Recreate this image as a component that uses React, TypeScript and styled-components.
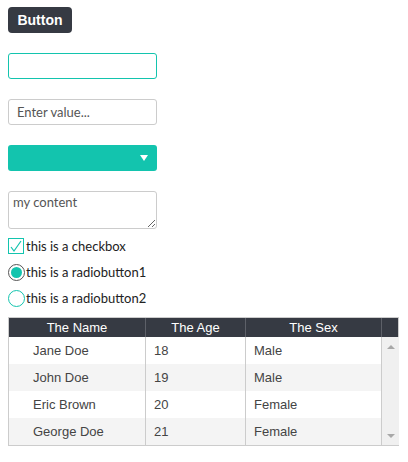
import React from "react";
import styled, { createGlobalStyle } from "styled-components";

const teal = "#13c4ae";
const dark = "#363a43";

const Global = createGlobalStyle`
  html, body { margin: 0; padding: 0; background: #fff; }
  body { font-family: "Lato", "Noto Sans", sans-serif; }
`;

const Page = styled.div`
  display: flex;
  flex-direction: column;
  align-items: flex-start;
  padding: 7px 8px 0 8px;
`;

const DarkButton = styled.button`
  width: 64px;
  height: 26px;
  border: none;
  border-radius: 4px;
  background: ${dark};
  color: #fff;
  font-family: "Liberation Sans", Arial, sans-serif;
  font-weight: bold;
  font-size: 14px;
  padding: 0;
  margin-bottom: 20px;
`;

const TextInput = styled.input<{ $focus?: boolean }>`
  box-sizing: border-box;
  width: 149px;
  height: 26px;
  border: 1px solid ${(p) => (p.$focus ? teal : "#cccccc")};
  border-radius: 3px;
  padding: 0 8px;
  font-family: "Lato", "Noto Sans", sans-serif;
  font-size: 13px;
  color: #333;
  outline: none;
  margin-bottom: 20px;
  &::placeholder { color: #555; }
`;

const Select = styled.div`
  box-sizing: border-box;
  width: 149px;
  height: 26px;
  border-radius: 3px;
  background: ${teal};
  display: flex;
  align-items: center;
  justify-content: flex-end;
  padding-right: 9px;
  margin-bottom: 20px;
`;

const Caret = styled.span`
  width: 0;
  height: 0;
  border-left: 4px solid transparent;
  border-right: 4px solid transparent;
  border-top: 6px solid #fff;
`;

const Area = styled.textarea`
  box-sizing: border-box;
  width: 149px;
  height: 38px;
  border: 1px solid #cccccc;
  border-radius: 3px;
  padding: 2px 4px;
  font-family: "Lato", "Noto Sans", sans-serif;
  font-size: 13px;
  color: #555;
  outline: none;
  resize: both;
  margin: 0 0 4px 0;
  display: block;
`;

const OptionRow = styled.label`
  display: flex;
  align-items: center;
  height: 26px;
  font-family: "Lato", "Noto Sans", sans-serif;
  font-size: 13px;
  color: #222;
`;

const CheckBox = styled.span`
  box-sizing: border-box;
  width: 16px;
  height: 16px;
  border: 1px solid ${teal};
  display: inline-flex;
  align-items: center;
  justify-content: center;
  margin-right: 2px;
`;

const Radio = styled.span<{ $checked?: boolean }>`
  box-sizing: border-box;
  width: 17px;
  height: 17px;
  border-radius: 50%;
  border: 1px solid ${(p) => (p.$checked ? "#555" : teal)};
  display: inline-flex;
  align-items: center;
  justify-content: center;
  margin-right: 1px;
  &::after {
    content: "";
    display: ${(p) => (p.$checked ? "block" : "none")};
    width: 11px;
    height: 11px;
    border-radius: 50%;
    background: ${teal};
  }
`;

const Table = styled.div`
  margin-top: 6px;
  box-sizing: border-box;
  width: 391px;
  border: 1px solid #cccccc;
  font-family: "Liberation Sans", Arial, sans-serif;
  font-size: 13px;
`;

const cols = "137px 100px 136px 1fr";

const HeadRow = styled.div`
  display: grid;
  grid-template-columns: ${cols};
  height: 19px;
  background: ${dark};
  color: #fff;
`;

const HeadCell = styled.div`
  display: flex;
  align-items: center;
  justify-content: center;
  border-right: 1px solid #5d6068;
  &:last-child { border-right: none; }
`;

const Body = styled.div`
  display: grid;
  grid-template-columns: 1fr 17px;
`;

const Rows = styled.div`
  display: flex;
  flex-direction: column;
`;

const Row = styled.div<{ $alt?: boolean }>`
  display: grid;
  grid-template-columns: 137px 100px 136px;
  height: 27px;
  background: ${(p) => (p.$alt ? "#f4f4f4" : "#fff")};
  color: #444;
`;

const Cell = styled.div<{ $pad?: number }>`
  display: flex;
  align-items: center;
  padding-left: ${(p) => p.$pad ?? 8}px;
  border-right: 1px solid #cccccc;
`;

const Scroll = styled.div`
  background: #f0f0f0;
  display: flex;
  flex-direction: column;
  justify-content: space-between;
  align-items: center;
  padding: 8px 0 7px;
`;

const Arrow = styled.span<{ $down?: boolean }>`
  width: 0;
  height: 0;
  border-left: 4px solid transparent;
  border-right: 4px solid transparent;
  ${(p) => (p.$down ? "border-top: 4px solid #a8a8a8;" : "border-bottom: 4px solid #a8a8a8;")}
`;

const data = [
  ["Jane Doe", "18", "Male"],
  ["John Doe", "19", "Male"],
  ["Eric Brown", "20", "Female"],
  ["George Doe", "21", "Female"],
];

export default function App() {
  return (
    <>
      <Global />
      <Page>
        <DarkButton>Button</DarkButton>
        <TextInput $focus />
        <TextInput placeholder="Enter value..." />
        <Select>
          <Caret />
        </Select>
        <Area defaultValue="my content" />
        <OptionRow>
          <CheckBox>
            <svg width="12" height="13" viewBox="0 0 12 13">
              <path d="M1 7 L4 11 L11 1" fill="none" stroke={teal} strokeWidth="1.2" />
            </svg>
          </CheckBox>
          this is a checkbox
        </OptionRow>
        <OptionRow>
          <Radio $checked />
          this is a radiobutton1
        </OptionRow>
        <OptionRow>
          <Radio />
          this is a radiobutton2
        </OptionRow>
        <Table>
          <HeadRow>
            <HeadCell>The Name</HeadCell>
            <HeadCell>The Age</HeadCell>
            <HeadCell>The Sex</HeadCell>
            <HeadCell />
          </HeadRow>
          <Body>
            <Rows>
              {data.map((r, i) => (
                <Row key={i} $alt={i % 2 === 1}>
                  <Cell $pad={24}>{r[0]}</Cell>
                  <Cell>{r[1]}</Cell>
                  <Cell>{r[2]}</Cell>
                </Row>
              ))}
            </Rows>
            <Scroll>
              <Arrow />
              <Arrow $down />
            </Scroll>
          </Body>
        </Table>
      </Page>
    </>
  );
}
